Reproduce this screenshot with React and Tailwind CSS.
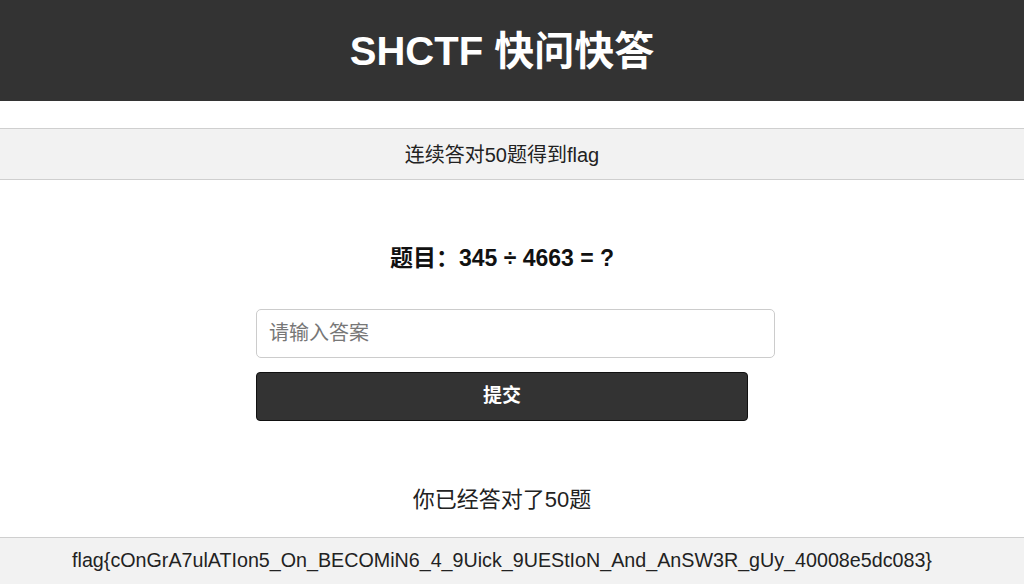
export default function App() {
  return (
    <div
      className="min-h-[584px] bg-white text-[#222]"
      style={{ fontFamily: '"Liberation Sans", Arial, "Noto Sans CJK SC", sans-serif' }}
    >
      <header className="h-[101px] bg-[#333333] flex items-center justify-center pr-[20px]">
        <h1 className="text-[40px] font-bold text-white">SHCTF 快问快答</h1>
      </header>

      <div className="mt-[27px] h-[52px] bg-[#f2f2f2] border-y border-[#cfcfcf] flex items-center justify-center pr-[20px] pt-[2px] text-[20px] text-[#222]">
        连续答对50题得到flag
      </div>

      <main className="flex flex-col items-center pr-[20px]">
        <h2 className="mt-[61px] text-[23px] font-bold text-[#111]">题目：345 ÷ 4663 = ?</h2>

        <div className="mt-[33px] w-[492px]">
          <input
            type="text"
            placeholder="请输入答案"
            className="w-[519px] h-[49px] px-[12px] border border-[#cccccc] rounded-[5px] text-[20px] placeholder:text-[#777] outline-none"
          />
          <button className="mt-[14px] w-[492px] h-[49px] bg-[#333333] text-white text-[19px] font-bold rounded-[4px] border border-[#111]">
            提交
          </button>
        </div>

        <p className="mt-[62px] text-[22px] text-[#222]">你已经答对了50题</p>
      </main>

      <footer className="mt-[21px] h-[48px] bg-[#f2f2f2] border-t border-[#cfcfcf] flex items-center justify-center pr-[20px] text-[19.7px] text-[#222]">
        flag{'{'}cOnGrA7ulATIon5_On_BECOMiN6_4_9Uick_9UEStIoN_And_AnSW3R_gUy_40008e5dc083{'}'}
      </footer>
    </div>
  )
}
